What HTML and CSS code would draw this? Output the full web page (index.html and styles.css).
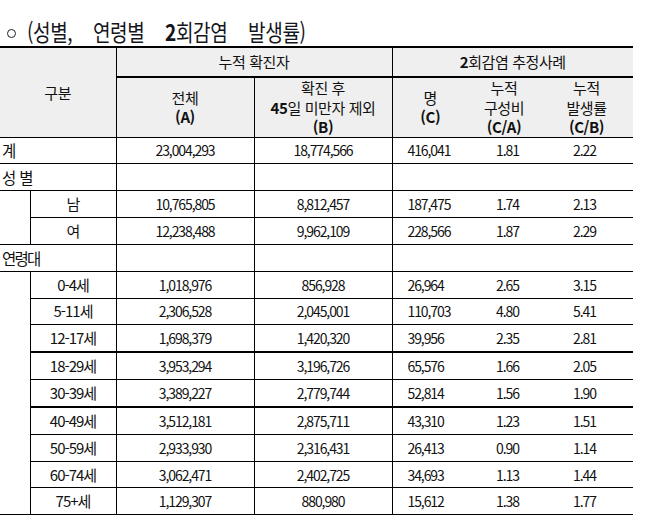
FILE: index.html
```html
<!DOCTYPE html>
<html lang="ko">
<head>
<meta charset="utf-8">
<link rel="stylesheet" href="styles.css">
</head>
<body>
<h1 class="title"><span class="dot"></span><span class="ttext">(성별, 연령별 <b>2</b>회감염 발생률)</span></h1>
<table class="rate">
  <colgroup>
    <col class="c0"><col class="c1"><col class="c2"><col class="c3"><col class="c4"><col class="c5"><col class="c6">
  </colgroup>
  <thead>
    <tr class="h1">
      <th colspan="2" rowspan="2" class="gubun">구분</th>
      <th colspan="2" class="bl grp">누적 확진자</th>
      <th colspan="3" class="bl grp"><b>2</b>회감염 추정사례</th>
    </tr>
    <tr class="h2">
      <th class="bl">전체<br><b>(A)</b></th>
      <th class="bl">확진 후<br><b>45</b>일 미만자 제외<br><b>(B)</b></th>
      <th class="bl">명<br><b>(C)</b></th>
      <th>누적<br>구성비<br><b>(C/A)</b></th>
      <th>누적<br>발생률<br><b>(C/B)</b></th>
    </tr>
  </thead>
  <tbody>
    <tr><td colspan="2" class="lab">계</td><td class="bl">23,004,293</td><td class="bl">18,774,566</td><td class="bl v4">416,041</td><td class="v5">1.81</td><td class="v6">2.22</td></tr>
    <tr><td colspan="2" class="lab wide">성별</td><td class="bl"></td><td class="bl"></td><td class="bl"></td><td></td><td></td></tr>
    <tr><td rowspan="2" class="side"></td><td class="bl sub">남</td><td class="bl">10,765,805</td><td class="bl">8,812,457</td><td class="bl v4">187,475</td><td class="v5">1.74</td><td class="v6">2.13</td></tr>
    <tr><td class="bl sub">여</td><td class="bl">12,238,488</td><td class="bl">9,962,109</td><td class="bl v4">228,566</td><td class="v5">1.87</td><td class="v6">2.29</td></tr>
    <tr><td colspan="2" class="lab">연령대</td><td class="bl"></td><td class="bl"></td><td class="bl"></td><td></td><td></td></tr>
    <tr><td rowspan="9" class="side"></td><td class="bl sub">0-4세</td><td class="bl">1,018,976</td><td class="bl">856,928</td><td class="bl v4">26,964</td><td class="v5">2.65</td><td class="v6">3.15</td></tr>
    <tr><td class="bl sub">5-11세</td><td class="bl">2,306,528</td><td class="bl">2,045,001</td><td class="bl v4">110,703</td><td class="v5">4.80</td><td class="v6">5.41</td></tr>
    <tr class="thick"><td class="bl sub">12-17세</td><td class="bl">1,698,379</td><td class="bl">1,420,320</td><td class="bl v4">39,956</td><td class="v5">2.35</td><td class="v6">2.81</td></tr>
    <tr><td class="bl sub">18-29세</td><td class="bl">3,953,294</td><td class="bl">3,196,726</td><td class="bl v4">65,576</td><td class="v5">1.66</td><td class="v6">2.05</td></tr>
    <tr class="thick"><td class="bl sub">30-39세</td><td class="bl">3,389,227</td><td class="bl">2,779,744</td><td class="bl v4">52,814</td><td class="v5">1.56</td><td class="v6">1.90</td></tr>
    <tr><td class="bl sub">40-49세</td><td class="bl">3,512,181</td><td class="bl">2,875,711</td><td class="bl v4">43,310</td><td class="v5">1.23</td><td class="v6">1.51</td></tr>
    <tr><td class="bl sub">50-59세</td><td class="bl">2,933,930</td><td class="bl">2,316,431</td><td class="bl v4">26,413</td><td class="v5">0.90</td><td class="v6">1.14</td></tr>
    <tr><td class="bl sub">60-74세</td><td class="bl">3,062,471</td><td class="bl">2,402,725</td><td class="bl v4">34,693</td><td class="v5">1.13</td><td class="v6">1.44</td></tr>
    <tr><td class="bl sub">75+세</td><td class="bl">1,129,307</td><td class="bl">880,980</td><td class="bl v4">15,612</td><td class="v5">1.38</td><td class="v6">1.77</td></tr>
  </tbody>
</table>
</body>
</html>
```

FILE: styles.css
```css
html, body {
  margin: 0;
  padding: 0;
  background: #ffffff;
}

body {
  font-family: "Noto Sans CJK KR", "Noto Sans", sans-serif;
  color: #111111;
}

.title {
  margin: 0;
  padding: 16px 0 0 7px;
  height: 30px;
  font-size: 23px;
  font-weight: 400;
  line-height: 30px;
  white-space: nowrap;
  color: #151520;
}

.title .dot {
  display: inline-block;
  box-sizing: border-box;
  width: 9px;
  height: 9px;
  border: 1.3px solid #222;
  border-radius: 50%;
  margin-right: 11px;
  vertical-align: 3px;
}

.title .ttext {
  display: inline-block;
  letter-spacing: -0.5px;
  word-spacing: 19px;
  transform: scaleX(0.83);
  transform-origin: 0 50%;
}

.title b {
  font-weight: 700;
}

.rate {
  border-collapse: collapse;
  table-layout: fixed;
  width: 633px;
  font-size: 14px;
}

.c0 { width: 30px; }
.c1 { width: 86px; }
.c2 { width: 138px; }
.c3 { width: 138px; }
.c4 { width: 76px; }
.c5 { width: 72px; }
.c6 { width: 93px; }

.rate th,
.rate td {
  padding: 0;
  border: 0;
  border-bottom: 1px solid #000;
  text-align: center;
  vertical-align: middle;
}

.rate th {
  background: #efefef;
  font-weight: 400;
  font-size: 15px;
  line-height: 19.5px;
  letter-spacing: -0.4px;
  color: #111;
}

.rate th b {
  font-weight: 700;
  letter-spacing: -0.4px;
}

.rate .h1 th {
  border-top: 2px solid #000;
  height: 28px;
}

.rate .h1 th.grp {
  border-bottom: 2px solid #000;
}

.rate .h2 th {
  height: 57px;
}

.rate .bl {
  border-left: 1px solid #000;
}

.rate td {
  height: 25.85px;
  line-height: 18px;
  font-size: 14px;
  letter-spacing: -1.1px;
  color: #111;
}

.rate td.lab {
  text-align: left;
  padding-left: 2px;
  font-size: 15.5px;
  letter-spacing: -1.8px;
}

.rate td.lab.wide {
  letter-spacing: 3px;
}

.rate td.sub {
  font-size: 15px;
  letter-spacing: -1px;
}

.rate td.v4 {
  text-align: left;
  padding-left: 15px;
}

.rate td.v5 {
  text-align: left;
  padding-left: 28px;
}

.rate td.v6 {
  text-align: left;
  padding-left: 33px;
}

.rate tr.thick td {
  border-bottom: 2px solid #000;
}

.rate td.side {
  border-bottom: 1px solid #000;
}
```
